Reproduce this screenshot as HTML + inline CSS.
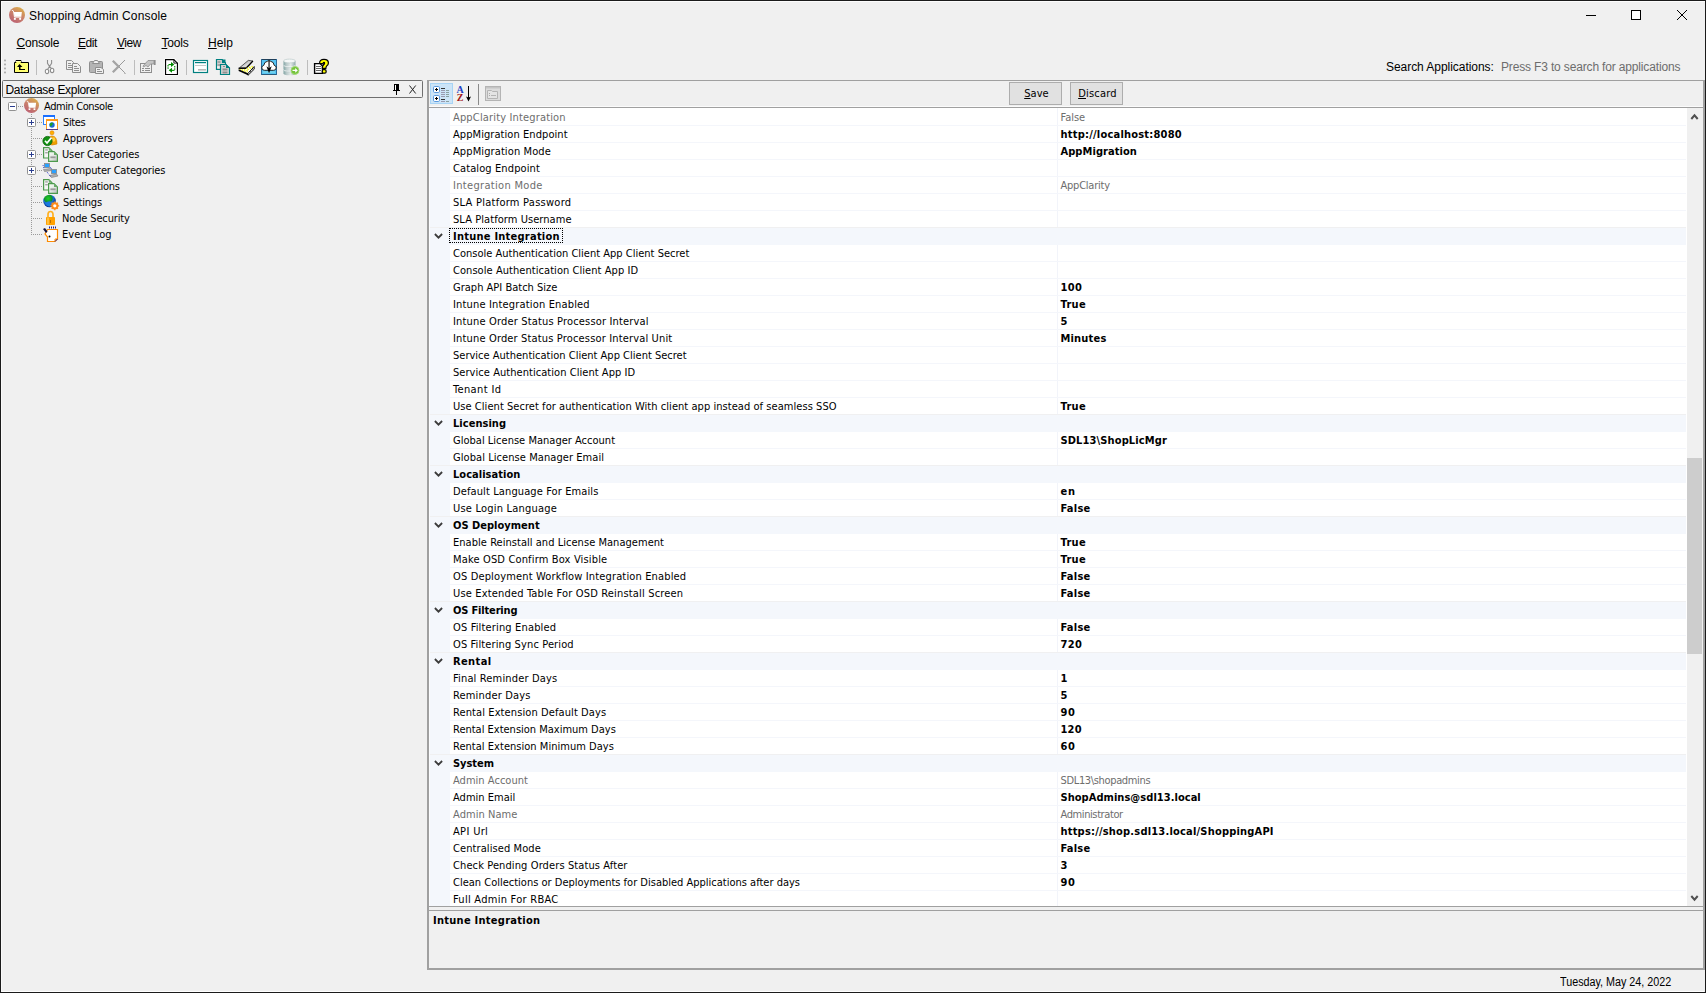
<!DOCTYPE html><html><head><meta charset="utf-8"><title>Shopping Admin Console</title><style>
*{box-sizing:border-box;margin:0;padding:0}
html,body{width:1706px;height:993px;overflow:hidden;background:#f0f0f0}
body{position:relative;font-family:"Liberation Sans","DejaVu Sans",sans-serif;font-size:12px;color:#000}
.a{position:absolute;white-space:nowrap}
.t{font-family:"DejaVu Sans Condensed","Liberation Sans",sans-serif;font-size:11px}
.s{font-family:"Liberation Sans","DejaVu Sans",sans-serif;font-size:12px}
u{text-decoration:underline;text-underline-offset:1px}
#grid{position:absolute;left:429px;top:108px;width:1258px;height:798px;background:#fff;overflow:hidden}
.r{position:absolute;left:0;width:1258px;height:17px}
.r .n,.r .v{position:absolute;top:1px;height:16px;line-height:16px;white-space:nowrap;font-family:"DejaVu Sans Condensed","Liberation Sans",sans-serif;font-size:11px}
.r .n{left:24px}
.r .v{left:631.5px;font-weight:bold}
.r.g .n,.r.g .v{color:#6d6d6d;font-weight:normal}
.r .ln{position:absolute;left:21px;top:16px;width:1237px;height:1px;background:#f4f6fb}
.r.c{background:#f4f7fc}
.r.c .n{font-weight:bold}
.r.c .ln{left:0;width:1258px;background:#f4f7fc}
.r.pc .ln{left:0;width:1258px;background:#f0f0f1}
.tree{font-family:"DejaVu Sans Condensed","Liberation Sans",sans-serif;font-size:11px}
</style></head><body>
<div class="a" style="left:0;top:0;width:1706px;height:1px;background:#1b1b1b"></div>
<div class="a" style="left:0;top:0;width:1px;height:993px;background:#1b1b1b"></div>
<div class="a" style="left:1705px;top:0;width:1px;height:993px;background:#1b1b1b"></div>
<div class="a" style="left:0;top:992px;width:1706px;height:1px;background:#1b1b1b"></div>
<div class="a" style="left:1px;top:991px;width:1703px;height:1px;background:#fff"></div>
<div class="a" style="left:1px;top:1px;width:1px;height:991px;background:#fafafa"></div>
<div class="a" style="left:1px;top:1px;width:1704px;height:1px;background:#fdfdfd"></div>
<div class="a" style="left:9px;top:7px;width:16px;height:16px"><svg width="16" height="16" viewBox="0 0 16 16"><defs><linearGradient id="cg" x1="0.8" y1="0" x2="0.2" y2="1"><stop offset="0" stop-color="#dcb046"/><stop offset="0.450" stop-color="#cb856a"/><stop offset="1" stop-color="#bb5e74"/></linearGradient></defs><circle cx="8" cy="8" r="8" fill="url(#cg)"/><path d="M4.800 5.100H12.900L12.300 9.700H5.500Z" fill="#fff"/><path d="M2.800 3.200L4.400 3.900L5.500 10.200H12.300" fill="none" stroke="#fff" stroke-width="0.900" stroke-linejoin="round" stroke-opacity="0.950"/><rect x="4.900" y="11" width="1.900" height="1.800" fill="#fff"/><rect x="10.200" y="11" width="1.900" height="1.800" fill="#fff"/></svg></div>
<div class="a s" style="left:30px;top:9px;line-height:15px"><span id="title" style="letter-spacing:0.152px;position:relative;left:-1.00px;">Shopping Admin Console</span></div>
<svg class="a" style="left:1580px;top:4px" width="120" height="24" viewBox="0 0 120 24"><path d="M6 11.5H16" stroke="#000" stroke-width="1" fill="none"/><rect x="51.5" y="6.5" width="9" height="9" fill="#fff" stroke="#000" stroke-width="1"/><path d="M97 6L107 16M107 6L97 16" stroke="#000" stroke-width="1" fill="none"/></svg>
<div class="a s" style="left:16px;top:35px;line-height:16px"><span id="m1" style="letter-spacing:-0.200px;position:relative;left:0.50px;"><u>C</u>onsole</span></div>
<div class="a s" style="left:78px;top:35px;line-height:16px"><span id="m2" style="letter-spacing:-0.433px;"><u>E</u>dit</span></div>
<div class="a s" style="left:117px;top:35px;line-height:16px"><span id="m3" style="letter-spacing:-0.433px;"><u>V</u>iew</span></div>
<div class="a s" style="left:161px;top:35px;line-height:16px"><span id="m4" style="letter-spacing:-0.175px;position:relative;left:0.50px;"><u>T</u>ools</span></div>
<div class="a s" style="left:208px;top:35px;line-height:16px"><span id="m5" style="letter-spacing:0.067px;"><u>H</u>elp</span></div>
<svg class="a" style="left:4px;top:59px" width="3" height="16" viewBox="0 0 3 16" ><rect x="0" y="0.6" width="2" height="1.700" fill="#aeaeae"/><rect x="0" y="4.6" width="2" height="1.700" fill="#aeaeae"/><rect x="0" y="8.6" width="2" height="1.700" fill="#aeaeae"/><rect x="0" y="12.6" width="2" height="1.700" fill="#aeaeae"/></svg>
<svg class="a" style="left:14px;top:59px" width="16" height="16" viewBox="0 0 16 16" ><path d="M0.500 13.500V3.500H2V1.500H7V3.500H14.500V13.500Z" fill="#ffff72" stroke="#000" stroke-width="1" stroke-linejoin="miter"/><rect x="2" y="1" width="5" height="1" fill="#000"/><rect x="2" y="2" width="5" height="1" fill="#ffffb0"/><path d="M5.5 5L3 8H5V11H11V10H6.5V8H8.5Z" fill="#000"/></svg>
<div class="a" style="left:36px;top:60px;width:1px;height:15px;background:#bdbdbd"></div>
<svg class="a" style="left:44px;top:59px" width="12" height="16" viewBox="0 0 12 16" ><path d="M3.500 1V4.300L5.500 7.500L7.300 9.400M7.600 1V4.300L5.500 7.500L3.700 10.300" stroke="#8e8e8e" stroke-width="1.100" fill="none"/><ellipse cx="3" cy="12.400" rx="1.700" ry="2.200" fill="#fff" stroke="#8e8e8e" stroke-width="1.100"/><ellipse cx="8.100" cy="11.400" rx="1.700" ry="2.200" fill="#fff" stroke="#8e8e8e" stroke-width="1.100"/></svg>
<svg class="a" style="left:65px;top:59px" width="17" height="16" viewBox="0 0 17 16" ><path d="M1.5 1.5H6.5L8.5 3.5V10.5H1.5Z" fill="#f0f0f0" stroke="#8e8e8e"/><path d="M3 4.5H6M3 6.5H7M3 8.5H7" stroke="#8e8e8e"/><path d="M7.5 4.5H12.5L15.5 7.5V13.5H7.5Z" fill="#f0f0f0" stroke="#8e8e8e"/><path d="M9 7.5H12M9 9.5H14M9 11.5H14" stroke="#8e8e8e"/></svg>
<svg class="a" style="left:88px;top:59px" width="17" height="16" viewBox="0 0 17 16" ><rect x="1.5" y="2.5" width="13" height="11" rx="1" fill="#b4b4b4" stroke="#8e8e8e"/><path d="M4.5 4.5L6.5 1.5H9.5L11.5 4.5Z" fill="#f0f0f0" stroke="#8e8e8e"/><path d="M7.5 8.5H13L15.5 10.5V14.5H7.5Z" fill="#f0f0f0" stroke="#8e8e8e"/><path d="M9 10.5H12M9 12.5H14" stroke="#8e8e8e"/></svg>
<svg class="a" style="left:111px;top:59px" width="16" height="16" viewBox="0 0 16 16" ><path d="M14 1L7.500 7.500L13.800 13.800" stroke="#8e8e8e" stroke-width="0.900" fill="none"/><rect x="13.500" y="14" width="1" height="1" fill="#8e8e8e"/><path d="M1.800 1.800L7.500 7.500L1.800 13.200" stroke="#a4a4a4" stroke-width="2.300" fill="none" stroke-linejoin="miter"/></svg>
<div class="a" style="left:134px;top:60px;width:1px;height:15px;background:#bdbdbd"></div>
<svg class="a" style="left:139px;top:59px" width="18" height="16" viewBox="0 0 18 16" ><rect x="1.5" y="4.5" width="11" height="9" fill="#f0f0f0" stroke="#8e8e8e"/><path d="M3 9.5H5M6 9.5H11M3 11.5H5M6 11.5H11" stroke="#8e8e8e"/><path d="M4 7L9 1.5H15V5H11.5L9 8L7 6.5L4.5 8Z" fill="#c4c4c4" stroke="#8e8e8e" stroke-width="0.8"/><rect x="15" y="1" width="1.6" height="5" fill="#8e8e8e"/></svg>
<svg class="a" style="left:164px;top:58px" width="16" height="18" viewBox="0 0 16 18" ><path d="M0.500 0.500H11L14.500 4V17.500H0.500Z" fill="#fff"/><path d="M1.550 1.550H9.800L13.450 5.200V16.450H1.550Z" fill="#fff" stroke="#000" stroke-width="1.150"/><path d="M9.900 1.600V5.100H13.400" fill="none" stroke="#000" stroke-width="0.850"/><path d="M7 4L10.300 6.500L7 9Z" fill="#008a00"/><rect x="4.500" y="6" width="3" height="1.100" fill="#008a00"/><rect x="3.500" y="7" width="1.100" height="1.500" fill="#008a00"/><rect x="3.500" y="9.300" width="1.100" height="1.500" fill="#008a00"/><path d="M8 9.800L4.700 12.300L8 14.800Z" fill="#008a00"/><rect x="7.500" y="11.800" width="3" height="1.100" fill="#008a00"/><rect x="10.200" y="10.300" width="1.100" height="1.500" fill="#008a00"/><rect x="10.200" y="8" width="1.100" height="1.500" fill="#008a00"/></svg>
<div class="a" style="left:186px;top:60px;width:1px;height:15px;background:#bdbdbd"></div>
<svg class="a" style="left:192px;top:59px" width="17" height="15" viewBox="0 0 17 15" ><rect x="1.5" y="1.5" width="14" height="12" fill="#fff" stroke="#008080" stroke-width="1.2"/><rect x="3" y="3" width="11" height="1.2" fill="#008080"/><rect x="3" y="6" width="11" height="1" fill="#c8c8c8"/><rect x="6" y="10" width="8" height="1.6" fill="#b8b8b8"/></svg>
<svg class="a" style="left:215px;top:58px" width="17" height="18" viewBox="0 0 17 18" ><path d="M1.5 1.5H7L10.5 5V11.5H1.5Z" fill="#d0d0d0" stroke="#008080" stroke-width="1.2"/><path d="M7 1.5L10.5 5V1.5Z" fill="#008080"/><path d="M7 1L11 5H7Z" fill="#008080"/><rect x="2.5" y="3" width="3" height="2" fill="#a8a8a8"/><rect x="2.5" y="6" width="3" height="2" fill="#a8a8a8"/><rect x="2" y="8.5" width="4" height="1.2" fill="#fff"/><path d="M5.5 6.5H11L14.5 10V16.5H5.5Z" fill="#d6d6d6" stroke="#008080" stroke-width="1.2"/><path d="M11 6L15 10H11Z" fill="#008080"/><rect x="8" y="8" width="2" height="1" fill="#909090"/><rect x="7.5" y="10.5" width="5" height="2" fill="#909090"/><rect x="7.500" y="13.5" width="5" height="2" fill="#909090"/></svg>
<svg class="a" style="left:237px;top:59px" width="19" height="18" viewBox="0 0 19 18" ><defs><linearGradient id="lid" x1="0" y1="0" x2="1" y2="1"><stop offset="0" stop-color="#8c8c8c"/><stop offset="0.550" stop-color="#d8d8d8"/><stop offset="1" stop-color="#fff"/></linearGradient></defs><path d="M2.400 8.900L11.300 1.400L15.900 2L9.500 8.700Z" fill="url(#lid)" stroke="#222" stroke-width="0.700"/><path d="M15.900 2L9.500 8.700" stroke="#000" stroke-width="1.300"/><path d="M1.600 9.500H9.500L16.500 6.300L17.200 7.500L11 14.200L1.600 10.500Z" fill="#fff"/><path d="M2.500 10.300L10.500 13.200M4.500 9.800L11.500 12.200M9.500 9.500L15.500 7.300M10.500 10.800L16 8" stroke="#f2f200" stroke-width="1.100" stroke-dasharray="1.400 1.200"/><path d="M1.500 9.300H9.300" stroke="#000" stroke-width="1.300"/><path d="M1.600 10.300L1.600 12L11 16.300L11 14.300Z" fill="#000"/><path d="M11 14.300L17.200 7.500V10.200L11 16.300Z" fill="#e6e6e6" stroke="#000" stroke-width="0.900"/><rect x="12.500" y="12" width="1" height="1" fill="#000"/><rect x="15" y="9.300" width="1" height="1" fill="#000"/></svg>
<svg class="a" style="left:261px;top:59px" width="16" height="16" viewBox="0 0 16 16" ><rect x="0" y="0" width="16" height="16" fill="#56c4f3"/><rect x="0" y="0" width="16" height="1" fill="#20405a"/><rect x="0" y="15" width="16" height="1" fill="#2a5a7a"/><rect x="0" y="0" width="1" height="16" fill="#2a6a9a"/><rect x="15" y="0" width="1" height="16" fill="#2a6a9a"/><path d="M3.500 11.300Q0.800 11.300 0.800 8.800Q0.800 6.800 2.800 6.300Q3.200 2.800 6.300 2.300Q8 0.900 9.700 2.300Q12.800 2.800 13.200 6.300Q15.200 6.800 15.200 8.800Q15.200 11.300 12.500 11.300Z" fill="#fff" stroke="#111" stroke-width="0.900"/><rect x="2" y="12.600" width="12" height="0.900" fill="#8fe0e8"/><rect x="7.500" y="1.500" width="1.100" height="9" fill="#000"/><path d="M5.400 7.300L8.050 14.300L10.700 7.300L8.050 9.300Z" fill="#000"/></svg>
<svg class="a" style="left:283px;top:58px" width="17" height="18" viewBox="0 0 17 18" ><defs><linearGradient id="dbg" x1="0" y1="0" x2="1" y2="0"><stop offset="0" stop-color="#7fa3a3"/><stop offset="0.250" stop-color="#b9c9c9"/><stop offset="0.600" stop-color="#e4eaea"/><stop offset="1" stop-color="#8faaaa"/></linearGradient></defs><path d="M0.500 12V15.2Q0.500 17.2 6.500 17.2Q12.500 17.2 12.500 15.2V12Z" fill="url(#dbg)"/><ellipse cx="6.500" cy="12" rx="6" ry="1.900" fill="#f4f7f7" stroke="#b4c4c4" stroke-width="0.600"/><path d="M0.500 7.5V10.7Q0.500 12.7 6.500 12.7Q12.500 12.7 12.500 10.7V7.5Z" fill="url(#dbg)"/><ellipse cx="6.500" cy="7.5" rx="6" ry="1.900" fill="#f4f7f7" stroke="#b4c4c4" stroke-width="0.600"/><path d="M0.500 3V6.2Q0.500 8.2 6.500 8.2Q12.500 8.2 12.500 6.2V3Z" fill="url(#dbg)"/><ellipse cx="6.500" cy="3" rx="6" ry="1.900" fill="#f4f7f7" stroke="#b4c4c4" stroke-width="0.600"/><circle cx="12" cy="12.400" r="4" fill="#74c23a" stroke="#a6dc7c" stroke-width="0.900"/><path d="M9.500 11.700H12.200V10.100L14.800 12.400L12.200 14.700V13.100H9.500Z" fill="#fff"/></svg>
<div class="a" style="left:307px;top:60px;width:1px;height:15px;background:#bdbdbd"></div>
<svg class="a" style="left:313px;top:58px" width="17" height="18" viewBox="0 0 17 18" ><path d="M1.600 5.600H7L9.500 8V15.400H1.600Z" fill="#fff" stroke="#000" stroke-width="1.400"/><path d="M3 8.500H8M3 10.500H8M3 12.500H8" stroke="#555" stroke-width="0.900"/><path d="M6.600 5.300Q6.600 1.300 11 1.300Q15.400 1.300 15.400 4.900Q15.400 6.900 13.600 8.100Q12.900 8.700 12.900 10.400H9.300Q9.300 7.800 10.700 6.800Q11.600 6.100 11.600 5.100Q11.600 4.300 10.900 4.300Q10.100 4.300 10.100 5.800Z" fill="#ffff00" stroke="#000" stroke-width="1.200" stroke-linejoin="round"/><rect x="9.300" y="11.700" width="3.800" height="3.400" rx="1.200" fill="#ffff00" stroke="#000" stroke-width="1.200"/></svg>
<div class="a s" style="left:1387px;top:59px;line-height:16px"><span id="sa" style="letter-spacing:-0.047px;position:relative;left:-1.00px;">Search Applications:</span></div>
<div class="a s" style="left:1502px;top:59px;line-height:16px;color:#6d6d6d"><span id="pf" style="letter-spacing:-0.156px;position:relative;left:-1.00px;">Press F3 to search for applications</span></div>
<div class="a" style="left:2px;top:80px;width:421px;height:18px;border:1px solid #6f6f6f;border-radius:1.5px"></div>
<div class="a s" style="left:6px;top:83px;line-height:15px"><span id="dbx" style="letter-spacing:-0.312px;position:relative;left:-0.50px;">Database Explorer</span></div>
<svg class="a" style="left:390px;top:82px" width="32" height="14" viewBox="0 0 32 14"><rect x="4" y="2" width="5" height="6" fill="#000"/><rect x="5" y="3" width="1" height="5" fill="#fff"/><rect x="3" y="8" width="7" height="1" fill="#000"/><rect x="6" y="9" width="1" height="4" fill="#000"/><path d="M19.500 3.500L25.700 11.500M25.700 3.500L19.500 11.500" stroke="#222" stroke-width="1" fill="none"/></svg>
<svg class="a" style="left:8px;top:102px" width="9" height="9" viewBox="0 0 9 9" ><rect x="0.500" y="0.500" width="8" height="8" rx="1" fill="#fff" stroke="#919191"/><rect x="2" y="4" width="5" height="1" fill="#2a3d8f"/></svg>
<div class="a" style="left:18px;top:106px;width:6px;height:1px;background:repeating-linear-gradient(90deg,#9a9a9a 0 1px,transparent 1px 2px)"></div>
<div class="a" style="left:24px;top:98px;width:15px;height:15px"><svg width="15" height="15" viewBox="0 0 16 16"><circle cx="8" cy="8" r="8" fill="url(#cg)"/><path d="M4.800 5.100H12.900L12.300 9.700H5.500Z" fill="#fff"/><path d="M2.800 3.200L4.400 3.900L5.500 10.200H12.300" fill="none" stroke="#fff" stroke-width="0.900" stroke-linejoin="round" stroke-opacity="0.950"/><rect x="4.900" y="11" width="1.900" height="1.800" fill="#fff"/><rect x="10.200" y="11" width="1.900" height="1.800" fill="#fff"/></svg></div>
<div class="a" style="left:31px;top:114px;width:1px;height:121px;background:repeating-linear-gradient(180deg,#9a9a9a 0 1px,transparent 1px 2px)"></div>
<svg class="a" style="left:27px;top:118px" width="9" height="9" viewBox="0 0 9 9" ><rect x="0.500" y="0.500" width="8" height="8" rx="1" fill="#fff" stroke="#919191"/><rect x="2" y="4" width="5" height="1" fill="#2a3d8f"/><rect x="4" y="2" width="1" height="5" fill="#2a3d8f"/></svg>
<div class="a" style="left:37px;top:122px;width:5px;height:1px;background:repeating-linear-gradient(90deg,#9a9a9a 0 1px,transparent 1px 2px)"></div>
<svg class="a" style="left:27px;top:150px" width="9" height="9" viewBox="0 0 9 9" ><rect x="0.500" y="0.500" width="8" height="8" rx="1" fill="#fff" stroke="#919191"/><rect x="2" y="4" width="5" height="1" fill="#2a3d8f"/><rect x="4" y="2" width="1" height="5" fill="#2a3d8f"/></svg>
<div class="a" style="left:37px;top:154px;width:5px;height:1px;background:repeating-linear-gradient(90deg,#9a9a9a 0 1px,transparent 1px 2px)"></div>
<svg class="a" style="left:27px;top:166px" width="9" height="9" viewBox="0 0 9 9" ><rect x="0.500" y="0.500" width="8" height="8" rx="1" fill="#fff" stroke="#919191"/><rect x="2" y="4" width="5" height="1" fill="#2a3d8f"/><rect x="4" y="2" width="1" height="5" fill="#2a3d8f"/></svg>
<div class="a" style="left:37px;top:170px;width:5px;height:1px;background:repeating-linear-gradient(90deg,#9a9a9a 0 1px,transparent 1px 2px)"></div>
<div class="a" style="left:33px;top:138px;width:9px;height:1px;background:repeating-linear-gradient(90deg,#9a9a9a 0 1px,transparent 1px 2px)"></div>
<div class="a" style="left:33px;top:186px;width:9px;height:1px;background:repeating-linear-gradient(90deg,#9a9a9a 0 1px,transparent 1px 2px)"></div>
<div class="a" style="left:33px;top:202px;width:9px;height:1px;background:repeating-linear-gradient(90deg,#9a9a9a 0 1px,transparent 1px 2px)"></div>
<div class="a" style="left:33px;top:218px;width:9px;height:1px;background:repeating-linear-gradient(90deg,#9a9a9a 0 1px,transparent 1px 2px)"></div>
<div class="a" style="left:33px;top:234px;width:9px;height:1px;background:repeating-linear-gradient(90deg,#9a9a9a 0 1px,transparent 1px 2px)"></div>
<svg class="a" style="left:43px;top:115px" width="16" height="16" viewBox="0 0 16 16" ><rect x="0.500" y="0.500" width="11" height="9" fill="#fff" stroke="#2a7fff"/><rect x="0" y="0" width="12" height="2" fill="#1a6fff"/><rect x="3.500" y="4.500" width="11" height="10" fill="#fff" stroke="#ff9a1a"/><rect x="3" y="4" width="12" height="2" fill="#ff9a1a"/><rect x="3" y="14" width="12" height="1" fill="#5a3a8a"/><circle cx="9" cy="10" r="2.700" fill="#1a6ad8"/><path d="M6.600 9.500Q7 7.400 9.300 7.400Q10.500 8.300 9.600 9.600Q8.600 10 8.300 11.400Q6.800 11 6.600 9.500Z" fill="#1fa01f"/></svg>
<svg class="a" style="left:42px;top:130px" width="17" height="17" viewBox="0 0 17 17" ><circle cx="10" cy="2.800" r="2" fill="#ffb000" stroke="#e08000" stroke-width="0.600"/><path d="M5.500 14Q5.500 6 10 6Q15 6 15 14Q10 16 5.500 14Z" fill="#f0a000" stroke="#d08000" stroke-width="0.600"/><ellipse cx="11.500" cy="9.500" rx="1.800" ry="2.300" fill="#ffd040"/><circle cx="5.500" cy="11" r="4.600" fill="#109010" stroke="#0a600a" stroke-width="0.800"/><path d="M3 10.800L5 13L9.500 7.600" fill="none" stroke="#fff" stroke-width="1.700"/></svg>
<svg class="a" style="left:43px;top:147px" width="16" height="16" viewBox="0 0 16 16" ><defs><linearGradient id="dg147" x1="0" y1="0" x2="1" y2="1"><stop offset="0" stop-color="#f8fff8"/><stop offset="0.550" stop-color="#e2e6e2"/><stop offset="1" stop-color="#b8b8b8"/></linearGradient></defs><path d="M0.600 0.600H5.800L9 3.800V11H0.600Z" fill="#f6f6f6" stroke="#4c9a4c" stroke-width="1.200"/><path d="M5.800 0.600V3.800H9Z" fill="#6aaa6a"/><rect x="2.200" y="2.200" width="2.600" height="1.400" fill="#a4a4a4"/><rect x="2.200" y="5" width="2.600" height="1.400" fill="#a4a4a4"/><path d="M5.600 4.600H11L14.400 8V14.400H5.600Z" fill="url(#dg147)" stroke="#4c9a4c" stroke-width="1.200"/><path d="M11 4.600V8H14.400Z" fill="#6aaa6a"/><rect x="7.400" y="9.400" width="5.200" height="1.800" fill="#9a9a9a"/></svg>
<svg class="a" style="left:42px;top:162px" width="17" height="17" viewBox="0 0 17 17" ><rect x="2.500" y="1.500" width="5" height="4" fill="#2aa0ff" stroke="#888" stroke-width="0.800"/><path d="M1.500 7.500L8.500 6.500L9.500 8.500L2.500 9.500Z" fill="#b0b0b0" stroke="#777" stroke-width="0.600"/><rect x="9.500" y="7.500" width="5" height="4" fill="#2aa0ff" stroke="#888" stroke-width="0.800"/><path d="M7.500 13.500L14.500 12L16 14L9.500 15.500Z" fill="#b0b0b0" stroke="#777" stroke-width="0.600"/><path d="M1 3L2 7M5 10L9 15M8 5L10 7" stroke="#2030d0" stroke-width="0.900" stroke-dasharray="1 1"/></svg>
<svg class="a" style="left:43px;top:179px" width="16" height="16" viewBox="0 0 16 16" ><defs><linearGradient id="dg179" x1="0" y1="0" x2="1" y2="1"><stop offset="0" stop-color="#f8fff8"/><stop offset="0.550" stop-color="#e2e6e2"/><stop offset="1" stop-color="#b8b8b8"/></linearGradient></defs><path d="M0.600 0.600H5.800L9 3.800V11H0.600Z" fill="#f6f6f6" stroke="#4c9a4c" stroke-width="1.200"/><path d="M5.800 0.600V3.800H9Z" fill="#6aaa6a"/><rect x="2.200" y="2.200" width="2.600" height="1.400" fill="#a4a4a4"/><rect x="2.200" y="5" width="2.600" height="1.400" fill="#a4a4a4"/><path d="M5.600 4.600H11L14.400 8V14.400H5.600Z" fill="url(#dg179)" stroke="#4c9a4c" stroke-width="1.200"/><path d="M11 4.600V8H14.400Z" fill="#6aaa6a"/><rect x="7.400" y="9.400" width="5.200" height="1.800" fill="#9a9a9a"/></svg>
<svg class="a" style="left:43px;top:194px" width="17" height="17" viewBox="0 0 17 17" ><defs><radialGradient id="gl" cx="0.400" cy="0.300" r="0.700"><stop offset="0" stop-color="#20d020"/><stop offset="0.450" stop-color="#109030"/><stop offset="0.550" stop-color="#1a70d0"/><stop offset="1" stop-color="#0a2a80"/></radialGradient></defs><circle cx="6.500" cy="7" r="6.300" fill="url(#gl)"/><path d="M2 9Q6 6 9 8Q12 9 12.500 6Q12 12 7 12.600Q3 12 2 9Z" fill="#1a78e0"/><circle cx="11.800" cy="11.800" r="3.600" fill="#ff8c1a"/><circle cx="11.800" cy="11.800" r="1.600" fill="#fff"/><path d="M11.800 7.400V16.200M7.400 11.800H16.200M8.700 8.700L14.900 14.900M14.900 8.700L8.700 14.900" stroke="#ff8c1a" stroke-width="1.300" stroke-dasharray="1.300 6.200"/></svg>
<svg class="a" style="left:45px;top:210px" width="12" height="17" viewBox="0 0 12 17" ><path d="M3 8V4.500Q3 1.500 5.500 1.500Q8 1.500 8 4.500V8" fill="none" stroke="#ffb020" stroke-width="1.700"/><rect x="1" y="7" width="9" height="8" rx="0.800" fill="#ffa000"/><rect x="2" y="7.500" width="2" height="7" fill="#ffc040"/><rect x="5" y="10" width="1" height="3" fill="#c07000"/></svg>
<svg class="a" style="left:42px;top:225px" width="18" height="18" viewBox="0 0 18 18" ><path d="M5.500 4.500H15.500V14L13 16.500H5.500V12L3 9Z" fill="#fff" stroke="#ff8c00" stroke-width="1.200"/><path d="M1 4L3 3L5.500 6.500L4 8Z" fill="#101040"/><circle cx="7.500" cy="11.500" r="1" fill="#000"/><path d="M7.500 1.500V3.500M9.500 1.500V3.500M11.500 1.500V3.500M13.500 1.500V3.500" stroke="#1a1a90" stroke-width="1"/><path d="M13 16.500V14H15.500" fill="none" stroke="#ff8c00" stroke-width="1"/><path d="M13 16.500L15.500 14" stroke="#3030b0" stroke-width="1"/></svg>
<div class="a tree" style="left:43px;top:99px;line-height:16px"><span id="t0" style="letter-spacing:-0.408px;position:relative;left:1.00px;">Admin Console</span></div>
<div class="a tree" style="left:62px;top:115px;line-height:16px"><span id="t1" style="letter-spacing:-0.400px;position:relative;left:1.00px;">Sites</span></div>
<div class="a tree" style="left:62px;top:131px;line-height:16px"><span id="t2" style="letter-spacing:-0.075px;position:relative;left:1.00px;">Approvers</span></div>
<div class="a tree" style="left:62px;top:147px;line-height:16px"><span id="t3" style="letter-spacing:-0.121px;">User Categories</span></div>
<div class="a tree" style="left:62px;top:163px;line-height:16px"><span id="t4" style="letter-spacing:-0.189px;position:relative;left:1.00px;">Computer Categories</span></div>
<div class="a tree" style="left:62px;top:179px;line-height:16px"><span id="t5" style="letter-spacing:-0.327px;position:relative;left:1.00px;">Applications</span></div>
<div class="a tree" style="left:62px;top:195px;line-height:16px"><span id="t6" style="letter-spacing:-0.214px;position:relative;left:1.00px;">Settings</span></div>
<div class="a tree" style="left:62px;top:211px;line-height:16px"><span id="t7" style="letter-spacing:-0.142px;">Node Security</span></div>
<div class="a tree" style="left:62px;top:227px;line-height:16px"><span id="t8" style="letter-spacing:0.050px;">Event Log</span></div>
<div class="a" style="left:427px;top:80px;width:1278px;height:890px;border:1px solid #a0a0a0;border-left:2px solid #a0a0a0;border-right:2px solid #a0a0a0;border-bottom:2px solid #a0a0a0"></div>
<div class="a" style="left:430px;top:83px;width:23px;height:21px;background:#cce4f7;border:1px solid #a8d4f5"></div>
<svg class="a" style="left:433px;top:86px" width="17" height="17" viewBox="0 0 17 17" ><rect x="0.500" y="0.5" width="6" height="6" rx="1.200" fill="#fff" stroke="#5a9ae0" stroke-width="1"/><rect x="2" y="3" width="3" height="1" fill="#000"/><rect x="3" y="2" width="1" height="3" fill="#000"/><rect x="0.500" y="9.5" width="6" height="6" rx="1.200" fill="#fff" stroke="#5a9ae0" stroke-width="1"/><rect x="2" y="12" width="3" height="1" fill="#000"/><rect x="3" y="11" width="1" height="3" fill="#000"/><rect x="8" y="2" width="4" height="1" fill="#333"/><rect x="8" y="13" width="4" height="1" fill="#333"/><rect x="8" y="4" width="4" height="1" fill="#9a9ab0"/><rect x="13" y="4" width="3" height="1" fill="#8aa0a0"/><rect x="8" y="6" width="4" height="1" fill="#9a9ab0"/><rect x="13" y="6" width="3" height="1" fill="#8aa0a0"/><rect x="8" y="8" width="4" height="1" fill="#9a9ab0"/><rect x="13" y="8" width="3" height="1" fill="#8aa0a0"/><rect x="8" y="10" width="4" height="1" fill="#9a9ab0"/><rect x="13" y="10" width="3" height="1" fill="#8aa0a0"/><rect x="8" y="15" width="4" height="1" fill="#9a9ab0"/><rect x="13" y="15" width="3" height="1" fill="#8aa0a0"/></svg>
<div class="a" style="left:456px;top:85px;width:8px;height:10px;font:bold 10px/10px 'Liberation Serif',serif;color:#1c3fc4;text-align:center">A</div>
<div class="a" style="left:456px;top:93px;width:8px;height:10px;font:bold 10px/10px 'Liberation Serif',serif;color:#a01818;text-align:center">Z</div>
<svg class="a" style="left:465px;top:85px" width="8" height="18" viewBox="0 0 8 18" ><rect x="3" y="1" width="1" height="13" fill="#000"/><path d="M1 11.500L3.500 16.500L6 11.500L3.500 12.500Z" fill="#000"/></svg>
<div class="a" style="left:478px;top:84px;width:1px;height:21px;background:#8a8a8a"></div>
<svg class="a" style="left:485px;top:86px" width="16" height="15" viewBox="0 0 16 15" ><rect x="0.500" y="0.500" width="15" height="14" fill="#dcdcdc" stroke="#b4b4b4"/><rect x="1" y="1" width="14" height="1.500" fill="#c4c4c4"/><path d="M2.500 4.500H6.500L7.500 5.500H12.500V12.500H2.500Z" fill="#e4e4e4" stroke="#b4b4b4"/><rect x="4" y="7" width="1" height="1" fill="#a8a8a8"/><rect x="4" y="9" width="1" height="1" fill="#a8a8a8"/><rect x="6" y="9" width="5" height="1" fill="#b4b4b4"/></svg>
<div class="a t" style="left:1009px;top:82px;width:53px;height:23px;border:1px solid #adadad;background:#e1e1e1;text-align:center;line-height:21px"><span id="save" style="letter-spacing:0.067px;position:relative;left:1.00px;"><u>S</u>ave</span></div>
<div class="a t" style="left:1070px;top:82px;width:53px;height:23px;border:1px solid #adadad;background:#e1e1e1;text-align:center;line-height:21px"><span id="disc" style="letter-spacing:0.217px;position:relative;left:1.00px;"><u>D</u>iscard</span></div>
<div class="a" style="left:429px;top:106px;width:1274px;height:1px;background:#fbfbfb"></div>
<div class="a" style="left:429px;top:107px;width:1274px;height:1px;background:#a0a0a0"></div>
<div class="a" style="left:429px;top:906px;width:1274px;height:1px;background:#a0a0a0"></div>
<div class="a" style="left:429px;top:910px;width:1274px;height:1px;background:#a0a0a0"></div>
<div id="grid">
<div class="a" style="left:0;top:0;width:21px;height:798px;background:#f4f7fc"></div><div class="a" style="left:0;top:0;width:1px;height:798px;background:#fbfcfe;z-index:3"></div>
<div class="a" style="left:628px;top:0;width:1px;height:798px;background:#f2f4fa"></div>
<div class="r g" style="top:1px"><div class="n"><span id="n0" style="letter-spacing:0.157px;">AppClarity Integration</span></div><div class="v"><span id="v0" style="letter-spacing:-0.025px;">False</span></div><div class="ln"></div></div>
<div class="r" style="top:18px"><div class="n"><span id="n1" style="letter-spacing:0.070px;">AppMigration Endpoint</span></div><div class="v"><span id="v1" style="letter-spacing:0.215px;">http://localhost:8080</span></div><div class="ln"></div></div>
<div class="r" style="top:35px"><div class="n"><span id="n2" style="letter-spacing:0.106px;">AppMigration Mode</span></div><div class="v"><span id="v2" style="letter-spacing:0.064px;">AppMigration</span></div><div class="ln"></div></div>
<div class="r" style="top:52px"><div class="n"><span id="n3" style="letter-spacing:0.107px;">Catalog Endpoint</span></div><div class="ln"></div></div>
<div class="r g" style="top:69px"><div class="n"><span id="n4" style="letter-spacing:0.313px;">Integration Mode</span></div><div class="v"><span id="v4" style="letter-spacing:-0.233px;">AppClarity</span></div><div class="ln"></div></div>
<div class="r" style="top:86px"><div class="n"><span id="n5" style="letter-spacing:0.255px;">SLA Platform Password</span></div><div class="ln"></div></div>
<div class="r pc" style="top:103px"><div class="n"><span id="n6" style="letter-spacing:0.065px;">SLA Platform Username</span></div><div class="ln"></div></div>
<div class="r c" style="top:120px"><svg style="position:absolute;left:5px;top:4.700px" width="9" height="7" viewBox="0 0 9 7"><path d="M0.900 1L4.500 4.700L8.100 1" fill="none" stroke="#3c3c3c" stroke-width="1.800"/></svg><div style="position:absolute;left:20px;top:0;width:114px;height:15px;border:1px dotted #000"></div><div class="n"><span id="n7" style="letter-spacing:0.241px;">Intune Integration</span></div><div class="ln"></div></div>
<div class="r" style="top:137px"><div class="n"><span id="n8" style="letter-spacing:0.009px;">Console Authentication Client App Client Secret</span></div><div class="ln"></div></div>
<div class="r" style="top:154px"><div class="n"><span id="n9" style="letter-spacing:0.057px;">Console Authentication Client App ID</span></div><div class="ln"></div></div>
<div class="r" style="top:171px"><div class="n"><span id="n10" style="letter-spacing:0.011px;">Graph API Batch Size</span></div><div class="v"><span id="v10" style="letter-spacing:0.350px;">100</span></div><div class="ln"></div></div>
<div class="r" style="top:188px"><div class="n"><span id="n11" style="letter-spacing:0.164px;">Intune Integration Enabled</span></div><div class="v"><span id="v11" style="letter-spacing:0.333px;">True</span></div><div class="ln"></div></div>
<div class="r" style="top:205px"><div class="n"><span id="n12" style="letter-spacing:0.165px;">Intune Order Status Processor Interval</span></div><div class="v"><span id="v12">5</span></div><div class="ln"></div></div>
<div class="r" style="top:222px"><div class="n"><span id="n13" style="letter-spacing:0.155px;">Intune Order Status Processor Interval Unit</span></div><div class="v"><span id="v13" style="letter-spacing:0.183px;">Minutes</span></div><div class="ln"></div></div>
<div class="r" style="top:239px"><div class="n"><span id="n14" style="letter-spacing:0.009px;">Service Authentication Client App Client Secret</span></div><div class="ln"></div></div>
<div class="r" style="top:256px"><div class="n"><span id="n15" style="letter-spacing:0.051px;">Service Authentication Client App ID</span></div><div class="ln"></div></div>
<div class="r" style="top:273px"><div class="n"><span id="n16" style="letter-spacing:0.362px;">Tenant Id</span></div><div class="ln"></div></div>
<div class="r pc" style="top:290px"><div class="n"><span id="n17" style="letter-spacing:0.052px;">Use Client Secret for authentication With client app instead of seamless SSO</span></div><div class="v"><span id="v17" style="letter-spacing:0.333px;">True</span></div><div class="ln"></div></div>
<div class="r c" style="top:307px"><svg style="position:absolute;left:5px;top:4.700px" width="9" height="7" viewBox="0 0 9 7"><path d="M0.900 1L4.500 4.700L8.100 1" fill="none" stroke="#3c3c3c" stroke-width="1.800"/></svg><div class="n"><span id="n18" style="letter-spacing:0.038px;">Licensing</span></div><div class="ln"></div></div>
<div class="r" style="top:324px"><div class="n"><span id="n19" style="letter-spacing:0.014px;">Global License Manager Account</span></div><div class="v"><span id="v19" style="letter-spacing:0.127px;">SDL13\ShopLicMgr</span></div><div class="ln"></div></div>
<div class="r pc" style="top:341px"><div class="n"><span id="n20" style="letter-spacing:0.070px;">Global License Manager Email</span></div><div class="ln"></div></div>
<div class="r c" style="top:358px"><svg style="position:absolute;left:5px;top:4.700px" width="9" height="7" viewBox="0 0 9 7"><path d="M0.900 1L4.500 4.700L8.100 1" fill="none" stroke="#3c3c3c" stroke-width="1.800"/></svg><div class="n"><span id="n21" style="letter-spacing:0.027px;">Localisation</span></div><div class="ln"></div></div>
<div class="r" style="top:375px"><div class="n"><span id="n22" style="letter-spacing:0.112px;">Default Language For Emails</span></div><div class="v"><span id="v22" style="letter-spacing:0.700px;">en</span></div><div class="ln"></div></div>
<div class="r pc" style="top:392px"><div class="n"><span id="n23" style="letter-spacing:0.206px;">Use Login Language</span></div><div class="v"><span id="v23" style="letter-spacing:0.250px;">False</span></div><div class="ln"></div></div>
<div class="r c" style="top:409px"><svg style="position:absolute;left:5px;top:4.700px" width="9" height="7" viewBox="0 0 9 7"><path d="M0.900 1L4.500 4.700L8.100 1" fill="none" stroke="#3c3c3c" stroke-width="1.800"/></svg><div class="n"><span id="n24" style="letter-spacing:0.017px;">OS Deployment</span></div><div class="ln"></div></div>
<div class="r" style="top:426px"><div class="n"><span id="n25" style="letter-spacing:0.039px;">Enable Reinstall and License Management</span></div><div class="v"><span id="v25" style="letter-spacing:0.333px;">True</span></div><div class="ln"></div></div>
<div class="r" style="top:443px"><div class="n"><span id="n26" style="letter-spacing:0.156px;">Make OSD Confirm Box Visible</span></div><div class="v"><span id="v26" style="letter-spacing:0.333px;">True</span></div><div class="ln"></div></div>
<div class="r" style="top:460px"><div class="n"><span id="n27" style="letter-spacing:0.146px;">OS Deployment Workflow Integration Enabled</span></div><div class="v"><span id="v27" style="letter-spacing:0.250px;">False</span></div><div class="ln"></div></div>
<div class="r pc" style="top:477px"><div class="n"><span id="n28" style="letter-spacing:0.169px;">Use Extended Table For OSD Reinstall Screen</span></div><div class="v"><span id="v28" style="letter-spacing:0.250px;">False</span></div><div class="ln"></div></div>
<div class="r c" style="top:494px"><svg style="position:absolute;left:5px;top:4.700px" width="9" height="7" viewBox="0 0 9 7"><path d="M0.900 1L4.500 4.700L8.100 1" fill="none" stroke="#3c3c3c" stroke-width="1.800"/></svg><div class="n"><span id="n29" style="letter-spacing:-0.164px;">OS Filtering</span></div><div class="ln"></div></div>
<div class="r" style="top:511px"><div class="n"><span id="n30" style="letter-spacing:0.153px;">OS Filtering Enabled</span></div><div class="v"><span id="v30" style="letter-spacing:0.250px;">False</span></div><div class="ln"></div></div>
<div class="r pc" style="top:528px"><div class="n"><span id="n31" style="letter-spacing:0.117px;">OS Filtering Sync Period</span></div><div class="v"><span id="v31" style="letter-spacing:0.350px;">720</span></div><div class="ln"></div></div>
<div class="r c" style="top:545px"><svg style="position:absolute;left:5px;top:4.700px" width="9" height="7" viewBox="0 0 9 7"><path d="M0.900 1L4.500 4.700L8.100 1" fill="none" stroke="#3c3c3c" stroke-width="1.800"/></svg><div class="n"><span id="n32" style="letter-spacing:0.380px;">Rental</span></div><div class="ln"></div></div>
<div class="r" style="top:562px"><div class="n"><span id="n33" style="letter-spacing:0.156px;">Final Reminder Days</span></div><div class="v"><span id="v33">1</span></div><div class="ln"></div></div>
<div class="r" style="top:579px"><div class="n"><span id="n34" style="letter-spacing:0.167px;">Reminder Days</span></div><div class="v"><span id="v34">5</span></div><div class="ln"></div></div>
<div class="r" style="top:596px"><div class="n"><span id="n35" style="letter-spacing:0.100px;">Rental Extension Default Days</span></div><div class="v"><span id="v35" style="letter-spacing:0.700px;">90</span></div><div class="ln"></div></div>
<div class="r" style="top:613px"><div class="n"><span id="n36" style="letter-spacing:-0.004px;">Rental Extension Maximum Days</span></div><div class="v"><span id="v36" style="letter-spacing:0.200px;">120</span></div><div class="ln"></div></div>
<div class="r pc" style="top:630px"><div class="n"><span id="n37" style="letter-spacing:0.032px;">Rental Extension Minimum Days</span></div><div class="v"><span id="v37" style="letter-spacing:0.700px;">60</span></div><div class="ln"></div></div>
<div class="r c" style="top:647px"><svg style="position:absolute;left:5px;top:4.700px" width="9" height="7" viewBox="0 0 9 7"><path d="M0.900 1L4.500 4.700L8.100 1" fill="none" stroke="#3c3c3c" stroke-width="1.800"/></svg><div class="n"><span id="n38" style="letter-spacing:-0.040px;">System</span></div><div class="ln"></div></div>
<div class="r g" style="top:664px"><div class="n"><span id="n39" style="letter-spacing:0.025px;">Admin Account</span></div><div class="v"><span id="v39" style="letter-spacing:-0.347px;">SDL13\shopadmins</span></div><div class="ln"></div></div>
<div class="r" style="top:681px"><div class="n"><span id="n40" style="letter-spacing:0.020px;">Admin Email</span></div><div class="v"><span id="v40" style="letter-spacing:0.043px;">ShopAdmins@sdl13.local</span></div><div class="ln"></div></div>
<div class="r g" style="top:698px"><div class="n"><span id="n41" style="letter-spacing:0.056px;">Admin Name</span></div><div class="v"><span id="v41" style="letter-spacing:-0.400px;">Administrator</span></div><div class="ln"></div></div>
<div class="r" style="top:715px"><div class="n"><span id="n42" style="letter-spacing:0.333px;">API Url</span></div><div class="v"><span id="v42" style="letter-spacing:0.197px;">https://shop.sdl13.local/ShoppingAPI</span></div><div class="ln"></div></div>
<div class="r" style="top:732px"><div class="n"><span id="n43" style="letter-spacing:0.093px;">Centralised Mode</span></div><div class="v"><span id="v43" style="letter-spacing:0.225px;">False</span></div><div class="ln"></div></div>
<div class="r" style="top:749px"><div class="n"><span id="n44" style="letter-spacing:0.106px;">Check Pending Orders Status After</span></div><div class="v"><span id="v44">3</span></div><div class="ln"></div></div>
<div class="r" style="top:766px"><div class="n"><span id="n45" style="letter-spacing:0.001px;">Clean Collections or Deployments for Disabled Applications after days</span></div><div class="v"><span id="v45" style="letter-spacing:0.700px;">90</span></div><div class="ln"></div></div>
<div class="r" style="top:783px"><div class="n"><span id="n46" style="letter-spacing:0.267px;">Full Admin For RBAC</span></div><div class="ln"></div></div>
</div>
<div class="a" style="left:1687px;top:108px;width:16px;height:798px;background:#f0f0f0"></div>
<div class="a" style="left:1686px;top:108px;width:1px;height:798px;background:#fff"></div>
<div class="a" style="left:1687px;top:458px;width:15px;height:196px;background:#cdcdcd"></div>
<svg class="a" style="left:1689px;top:112px" width="11" height="10" viewBox="0 0 11 10" ><path d="M2.300 7L5.500 3.300L8.700 7" fill="none" stroke="#505050" stroke-width="2"/></svg>
<svg class="a" style="left:1689px;top:893px" width="11" height="10" viewBox="0 0 11 10" ><path d="M2.300 3L5.500 6.700L8.700 3" fill="none" stroke="#505050" stroke-width="2"/></svg>
<div class="a t" style="left:433px;top:913px;line-height:16px;font-weight:bold"><span id="desc" style="letter-spacing:0.265px;">Intune Integration</span></div>
<div class="a" style="left:1560px;top:974px;line-height:16px;transform:scaleX(0.896);transform-origin:0 50%"><span id="datex">Tuesday, May 24, 2022</span></div>
</body></html>
